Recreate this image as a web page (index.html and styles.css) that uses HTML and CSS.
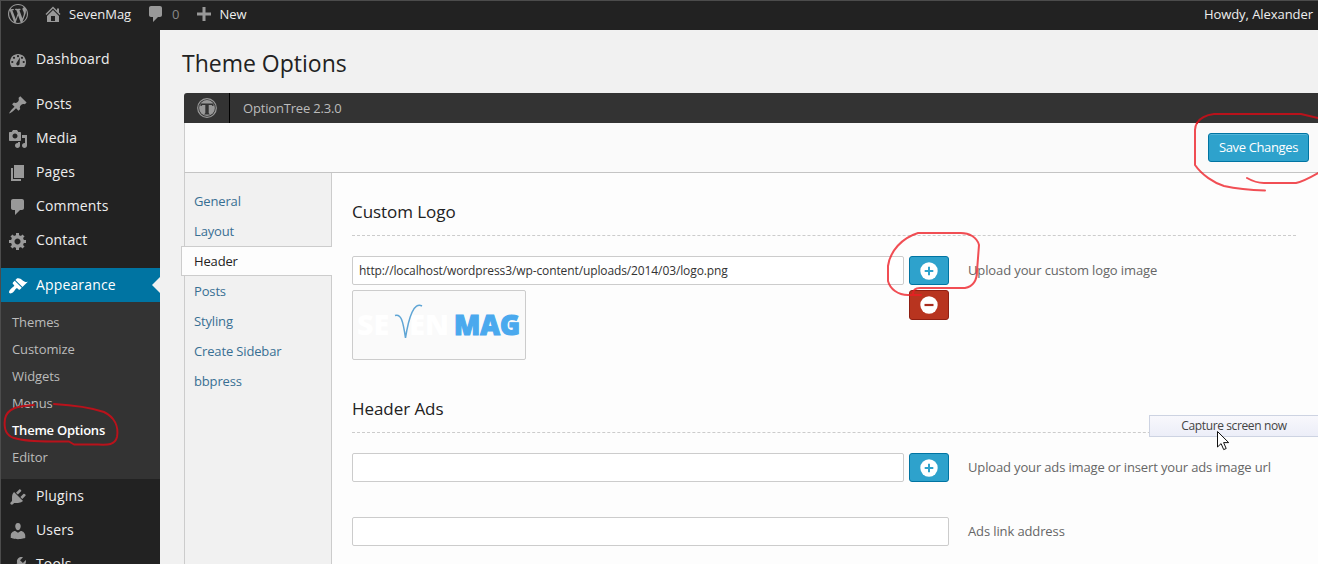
FILE: index.html
```
<!DOCTYPE html>
<html lang="en">
<head>
<meta charset="utf-8">
<title>Theme Options</title>
<link rel="stylesheet" href="styles.css">
</head>
<body>
<div class="page">
  <header class="adminbar">
    <svg class="ico wp" viewBox="0 0 20 20"><path d="M20 10c0-5.51-4.49-10-10-10C4.48 0 0 4.49 0 10c0 5.52 4.48 10 10 10 5.51 0 10-4.48 10-10zM7.78 15.37L4.37 6.22c.55-.02 1.17-.08 1.17-.08.5-.06.44-1.13-.06-1.11 0 0-1.45.11-2.37.11-.18 0-.37 0-.58-.01C4.12 2.69 6.87 1.11 10 1.11c2.33 0 4.45.87 6.05 2.34-.68-.11-1.65.39-1.65 1.58 0 .74.45 1.36.9 2.1.35.61.55 1.36.55 2.46 0 1.49-1.4 5-1.4 5l-3.03-8.37c.54-.02.82-.17.82-.17.5-.05.44-1.25-.06-1.22 0 0-1.44.12-2.38.12-.87 0-2.33-.12-2.33-.12-.5-.03-.56 1.2-.06 1.22l.92.08 1.26 3.41zM17.41 10c.24-.64.74-1.87.43-4.25.7 1.29 1.05 2.71 1.05 4.25 0 3.29-1.73 6.24-4.4 7.78.97-2.59 1.94-5.2 2.92-7.78zM6.1 18.09C3.12 16.65 1.11 13.53 1.11 10c0-1.3.23-2.48.72-3.59C3.25 10.3 4.67 14.2 6.1 18.09zm4.03-6.63l2.58 6.98c-.86.29-1.76.45-2.71.45-.79 0-1.57-.11-2.29-.33.81-2.38 1.62-4.74 2.42-7.1z"/></svg>
    <svg class="ico home" viewBox="0 0 20 20"><path fill-rule="evenodd" d="M16 8.5l1.53 1.53-1.06 1.06L10 4.6l-6.47 6.49-1.06-1.06L10 2.5l4 4v-2h2v4zm-6-2.46l6 5.99V18H4v-5.97zM12 17v-5H8v5h4z"/></svg>
    <span class="site">SevenMag</span>
    <svg class="ico bubble" viewBox="0 0 20 20"><path d="M5 2h9c1.1 0 2 .9 2 2v7c0 1.1-.9 2-2 2h-2l-5 5v-5H5c-1.1 0-2-.9-2-2V4c0-1.1.9-2 2-2z"/></svg>
    <span class="count">0</span>
    <svg class="ico plus" viewBox="0 0 14 14"><path d="M5.5 0h3v5.500h5.500v3h-5.500v5.500h-3v-5.500h-5.500v-3h5.500z"/></svg>
    <span class="new">New</span>
    <span class="howdy">Howdy, Alexander</span>
  </header>
  <div class="body">
    <nav class="menu">
      <a class="item first"><svg class="ico" viewBox="0 0 20 20"><path fill-rule="evenodd" d="M3.760 17h12.480c1.100-1.370 1.760-3.110 1.760-5 0-4.420-3.580-8-8-8s-8 3.580-8 8c0 1.890.66 3.630 1.760 5z"/><g class="hole"><circle cx="10" cy="6.200" r="1.100"/><circle cx="6" cy="7.800" r="1.100"/><circle cx="14" cy="7.800" r="1.100"/><circle cx="4.300" cy="12" r="1.100"/><circle cx="15.700" cy="12" r="1.100"/><path d="M12 7.500l-.4 6a1.700 1.700 0 1 1-2.800-1z"/></g></svg>Dashboard</a>
      <a class="item gap"><svg class="ico" viewBox="0 0 20 20"><path d="M10.440 3.020l1.820-1.820 6.360 6.350-1.830 1.820c-1.050-.68-2.480-.57-3.410.36l-.75.75c-.92.93-1.040 2.350-.35 3.410l-1.830 1.820-2.410-2.410-2.800 2.790c-.42.42-3.380 2.710-3.800 2.290s1.860-3.390 2.280-3.810l2.790-2.790L4.100 9.360l1.830-1.820c1.050.69 2.480.57 3.400-.36l.75-.75c.93-.92 1.050-2.350.36-3.410z"/></svg>Posts</a>
      <a class="item"><svg class="ico" viewBox="0 0 20 20"><path fill-rule="evenodd" d="M13 11V4c0-.55-.45-1-1-1h-1.670L9 1H5L3.670 3H2c-.55 0-1 .45-1 1v7c0 .55.45 1 1 1h10c.55 0 1-.45 1-1zM7 4.500c1.380 0 2.500 1.120 2.500 2.500S8.380 9.500 7 9.500 4.500 8.380 4.500 7 5.620 4.500 7 4.500zM14 6h5v10.500c0 1.380-1.120 2.500-2.500 2.500S14 17.880 14 16.500s1.120-2.500 2.500-2.500c.17 0 .34.02.5.05V9h-3V6zm-4 8.050V13h2v3.500c0 1.380-1.120 2.500-2.500 2.500S7 17.880 7 16.500 8.120 14 9.500 14c.17 0 .34.02.5.05z"/></svg>Media</a>
      <a class="item"><svg class="ico" viewBox="0 0 20 20"><path d="M6 15V2h10v13H6zm-1 1h8v2H3V5h2v11z"/></svg>Pages</a>
      <a class="item"><svg class="ico" viewBox="0 0 20 20"><path d="M5 2h9c1.100 0 2 .9 2 2v7c0 1.100-.9 2-2 2h-2l-5 5v-5H5c-1.100 0-2-.9-2-2V4c0-1.100.9-2 2-2z"/></svg>Comments</a>
      <a class="item"><svg class="ico" viewBox="0 0 20 20"><path fill-rule="evenodd" d="M18 12h-2.180c-.17.7-.44 1.350-.81 1.930l1.540 1.540-2.100 2.100-1.540-1.540c-.58.36-1.230.63-1.910.79V19H8v-2.180c-.68-.16-1.330-.43-1.910-.79l-1.540 1.540-2.120-2.120 1.540-1.540c-.36-.58-.63-1.230-.79-1.910H1V9.030h2.170c.16-.7.44-1.350.8-1.940L2.430 5.550l2.100-2.100 1.540 1.540c.58-.37 1.240-.64 1.930-.81V2h3v2.180c.68.160 1.330.43 1.910.79l1.540-1.540 2.120 2.120-1.540 1.540c.36.59.64 1.240.8 1.940H18V12zm-8.500 1.500c1.660 0 3-1.340 3-3s-1.340-3-3-3-3 1.340-3 3 1.340 3 3 3z"/></svg>Contact</a>
      <a class="item gap current"><svg class="ico" viewBox="0 0 20 20"><path d="M14.480 11.060L7.410 3.990l1.500-1.500c.5-.56 2.300-.47 3.510.32 1.210.8 1.430 1.280 2.910 2.100 1.180.64 2.450 1.260 4.450.85zm-.71.71L6.700 4.700 4.930 6.470c-.39.39-.39 1.020 0 1.410l1.060 1.060c.39.39.39 1.030 0 1.420-.6.6-1.430 1.110-2.210 1.690-.35.26-.7.53-1.010.84C1.430 14.230.4 16.080 1.400 17.070c.99 1 2.840-.03 4.180-1.360.31-.31.58-.66.85-1.020.57-.78 1.080-1.610 1.690-2.210.39-.39 1.020-.39 1.410 0l1.060 1.060c.39.39 1.020.39 1.410 0z"/></svg>Appearance</a>
      <div class="submenu">
        <a>Themes</a><a>Customize</a><a>Widgets</a><a>Menus</a><a class="on">Theme Options</a><a>Editor</a>
      </div>
      <a class="item"><svg class="ico" viewBox="0 0 20 20"><path d="M13.110 4.360L9.870 7.600 8 5.730l3.240-3.240c.35-.34 1.050-.2 1.560.32.52.51.66 1.210.31 1.550zm-8 1.770l.91-1.120 9.010 9.010-1.190.84c-.71.71-2.630 1.160-3.820 1.160H6.140L4.900 17.260c-.59.59-1.540.59-2.120 0-.59-.58-.59-1.530 0-2.120l1.240-1.240v-3.880c0-1.130.4-3.190 1.090-3.890zm7.260 3.970l3.240-3.240c.34-.35 1.040-.21 1.550.31.52.51.66 1.210.31 1.550l-3.240 3.250z"/></svg>Plugins</a>
      <a class="item"><svg class="ico" viewBox="0 0 20 20"><path d="M10 9.250c-2.270 0-2.730-3.440-2.730-3.440C7 4.020 7.820 2 9.970 2c2.160 0 2.980 2.020 2.710 3.810 0 0-.41 3.440-2.680 3.440zm0 2.570L12.720 10c2.390 0 4.520 2.330 4.520 4.530v2.490s-3.650 1.130-7.240 1.130c-3.650 0-7.240-1.130-7.240-1.130v-2.490c0-2.250 1.940-4.480 4.470-4.480z"/></svg>Users</a>
      <a class="item"><svg class="ico" viewBox="0 0 20 20"><path d="M16.680 9.770c-1.340 1.340-3.300 1.670-4.950.99l-5.410 6.520c-.99.99-2.590.99-3.580 0s-.99-2.590 0-3.570l6.520-5.420c-.68-1.650-.35-3.610.99-4.950 1.280-1.280 3.120-1.620 4.720-1.060l-2.890 2.890 2.820 2.820 2.860-2.870c.53 1.580.18 3.390-1.080 4.650z"/></svg>Tools</a>
    </nav>
    <main class="main">
      <h1>Theme Options</h1>
      <section class="panel">
        <div class="panel-head">
          <div class="badge"><svg viewBox="0 0 20 20"><circle cx="10" cy="10" r="9.300" fill="none" stroke="#999" stroke-width="1.200"/><circle cx="10" cy="10" r="7.900" fill="#999"/><path d="M3.500 8V5.400h13V8h-1l-.8-1.100h-3V15l1.200 1.500H7.100L8.300 15V6.900h-3L4.500 8z" fill="#333"/></svg></div>
          <span>OptionTree 2.3.0</span>
        </div>
        <div class="toolbar"><button class="save">Save Changes</button></div>
        <div class="columns">
          <ul class="tabs">
            <li>General</li><li>Layout</li><li class="active">Header</li><li>Posts</li><li>Styling</li><li>Create Sidebar</li><li>bbpress</li>
          </ul>
          <div class="content">
            <h2>Custom Logo</h2>
            <div class="row logo-row">
              <div class="field">
                <div class="line">
                  <div class="input">http://localhost/wordpress3/wp-content/uploads/2014/03/logo.png</div>
                  <button class="sq"><svg viewBox="0 0 18 18"><circle cx="9" cy="9" r="8.700" fill="#fff"/><path d="M9 4.700v8.600M4.700 9h8.600" stroke="#2ea2cc" stroke-width="2"/></svg></button>
                </div>
                <div class="line second">
                  <div class="preview">
                    <svg viewBox="0 0 172 68"><text class="seven" x="4" y="44" textLength="92" lengthAdjust="spacingAndGlyphs">SE<tspan class="gapv">V</tspan>EN</text><text class="mag" x="101" y="44" textLength="66" lengthAdjust="spacingAndGlyphs">MAG</text><path class="vee" d="M42 24.500c6-2 8 5 10.500 22.500C56 25 61 11 69 15"/></svg>
                  </div>
                  <button class="sq red"><svg viewBox="0 0 18 18"><circle cx="9" cy="9" r="8.700" fill="#fff"/><path d="M4.500 9h9" stroke="#a92a1c" stroke-width="2.200"/></svg></button>
                </div>
              </div>
              <p>Upload your custom logo image</p>
            </div>
            <h2>Header Ads</h2>
            <div class="row ads-row">
              <div class="field">
                <div class="line">
                  <div class="input"></div>
                  <button class="sq"><svg viewBox="0 0 18 18"><circle cx="9" cy="9" r="8.700" fill="#fff"/><path d="M9 4.700v8.600M4.700 9h8.600" stroke="#2ea2cc" stroke-width="2"/></svg></button>
                </div>
              </div>
              <p>Upload your ads image or insert your ads image url</p>
            </div>
            <div class="row">
              <div class="field"><div class="input"></div></div>
              <p>Ads link address</p>
            </div>
          </div>
        </div>
      </section>
    </main>
  </div>
  <div class="capture">Capture screen now</div>
  <svg class="overlay" viewBox="0 0 1318 564">
    <path class="cursor" d="M1217.500 431.500v15.500l3.600-3.400 2.600 6 2.500-1.100-2.600-5.900h5.100z"/>
    <g class="ink">
      <path class="dark" d="M54 404C72 405 92 408 104 412C114 417 119 426 117 437C115 445 108 445 98 444.500H74L69 441.500C55 441 30 443 14 438C4 435 4 426 5 419C7 408 18 406 34 405"/>
      <path d="M913 294C913 289 916 288 920 288H965C975 286 977 279 977 271L979 245C977 237 969 233 961 233H918C902 238 890 251 888 266V281C890 289 898 295 908 295H921"/>
      <path class="dark" d="M1318 118L1301 114H1214C1206 115 1200 118 1197 123"/>
      <path d="M1197 123Q1195 126 1195 130V165C1202 175 1214 183 1224 186C1238 189 1250 190 1265 190.500"/>
      <path d="M1247 178C1254 182 1258 183 1264 183H1296C1304 181 1311 177 1318 173"/>
    </g>
  </svg>
</div>
</body>
</html>
```
FILE: styles.css
```
* { box-sizing: border-box; }
body { margin: 0; font-family: "Open Sans", sans-serif; font-size: 13px; overflow: hidden; }
.page { position: relative; width: 1318px; height: 564px; overflow: hidden; background: #f1f1f1; display: flex; flex-direction: column; }
.page::after { content: ""; position: absolute; inset: 0; border-left: 1px solid #4c4c4c; border-top: 1px solid #4c4c4c; }
.ico { width: 20px; height: 20px; fill: #999; flex: none; display: block; }

.adminbar { flex: none; height: 30px; background: #222; color: #eee; display: flex; align-items: center; padding: 0 5px 2px 8px; line-height: 30px; }
.adminbar span { display: block; height: 30px; }
.adminbar .home { margin-left: 15px; }
.site { margin-left: 6px; width: 64px; }
.adminbar .bubble { margin-left: 13px; }
.adminbar .count { margin-left: 6px; color: #888; }
.adminbar .plus { width: 14px; height: 14px; margin-left: 18px; }
.new { margin-left: 8px; }
.howdy { margin-left: auto; letter-spacing: -.06px; }

.body { flex: none; height: 534px; display: flex; }
.menu { width: 160px; background: #222; padding-top: 12px; flex: none; display: flex; flex-direction: column; }
.item { height: 34px; flex: none; display: flex; align-items: center; padding: 0 0 0 8px; gap: 8px; color: #eee; font-size: 14px; line-height: 34px; letter-spacing: .15px; }
.item .ico { margin-top: 1px; }
.hole { fill: #222; }
.gap { margin-top: 11px; }
.current { background: #0074a2; color: #fff; position: relative; }
.current .ico { fill: #fff; }
.current::after { content: ""; position: absolute; right: 0; top: 9px; border: 8px solid transparent; border-right-color: #f1f1f1; border-left: 0; }
.submenu { flex: none; height: 177px; background: #333; padding: 7px 12px; display: flex; flex-direction: column; color: #bbb; letter-spacing: -.08px; }
.submenu a { height: 27px; line-height: 27px; }
.submenu .on { color: #fff; font-weight: 600; letter-spacing: -.23px; }

.main { flex: 1; padding-left: 24px; }
h1 { margin: 0 0 0 -2px; height: 63px; padding-top: 17px; line-height: 32px; font-size: 23px; font-weight: 400; color: #222; }
.panel { display: flex; flex-direction: column; height: 471px; }
.panel-head { flex: none; height: 30px; background: #333; border-top-left-radius: 3px; display: flex; color: #bbb; line-height: 30px; letter-spacing: -.18px; }
.badge { width: 46px; border-right: 1px solid #000; padding: 5px 0 0 13px; }
.badge svg { width: 20px; height: 20px; display: block; }
.panel-head span { margin-left: 13px; }
.toolbar { flex: none; height: 50px; background: #fafafa; border-left: 1px solid #ccc; border-bottom: 1px solid #c4c4c4; display: flex; justify-content: flex-end; padding: 10px 9px 0 0; }
.save { width: 101px; height: 29px; padding: 0 0 1px; background: #2ea2cc; border: 1px solid #0074a2; border-radius: 3px; color: #fff; font: 13px "Open Sans", sans-serif; letter-spacing: -.35px; box-shadow: inset 0 1px 0 rgba(120,200,230,.5); }
.columns { flex: 1; display: flex; background: #fdfdfd; border-left: 1px solid #ccc; }
.tabs { margin: 0; padding: 13px 0 0; list-style: none; width: 147px; flex: none; background: #f1f1f1; border-right: 1px solid #ccc; color: #386f93; letter-spacing: -.15px; }
.tabs li { height: 30px; line-height: 30px; padding-left: 9px; }
.tabs .active { margin: 0 -1px 0 -4px; padding-left: 12px; line-height: 28px; background: #fdfdfd; border: 1px solid #ccc; border-right: 0; color: #222; }
.content { flex: 1; padding: 25px 22px 0 20px; color: #666; }
h2 { margin: 0 0 20px; height: 38px; line-height: 28px; border-bottom: 1px dashed #ccc; font-size: 17px; font-weight: 400; color: #222; letter-spacing: -.06px; }
.row { display: flex; gap: 19px; }
.row p { margin: 0; line-height: 29px; white-space: nowrap; letter-spacing: -.12px; }
.ads-row p { letter-spacing: -.15px; }
.field { width: 597px; flex: none; }
.line { display: flex; gap: 5px; height: 29px; }
.second { margin-top: 5px; justify-content: space-between; }
.input { flex: 1; height: 29px; border: 1px solid #ccc; background: #fff; padding-left: 6px; line-height: 27px; font-size: 12px; color: #333; border-radius: 2px; letter-spacing: -.11px; }
.sq { width: 40px; height: 29px; padding: 0; border: 1px solid #0074a2; border-radius: 3px; background: #2ea2cc; display: flex; align-items: center; justify-content: center; flex: none; }
.sq svg { width: 18px; height: 18px; }
.red { height: 30px; background: #b8341f; border-color: #8f1f12; }
.preview { width: 174px; height: 70px; border: 1px solid #ccc; background: #fafafa; border-radius: 2px; }
.preview svg { display: block; width: 172px; height: 68px; }
.seven, .mag { font: 800 29px "Open Sans", sans-serif; fill: #4aa9ee; }
.mag { stroke: #4aa9ee; stroke-width: 1.2; }
.seven { fill: #fff; }
.gapv { fill: none; }
.vee { fill: none; stroke: #5fa5d5; stroke-width: 1.5; }
.logo-row { height: 104px; margin-bottom: 35px; }
.ads-row { height: 64px; }

.capture { position: absolute; left: 1149px; top: 415px; width: 170px; height: 22px; border: 1px solid #cdd3e2; background: linear-gradient(#f8f8fc, #eceef8); text-align: center; line-height: 20px; font-size: 12px; letter-spacing: -.38px; color: #444; }
.overlay { position: absolute; left: 0; top: 0; width: 1318px; height: 564px; }
.cursor { fill: #fff; stroke: #111; stroke-width: 1; }
.ink { fill: none; stroke: #ed1c24; stroke-opacity: .78; stroke-width: 2; stroke-linecap: round; stroke-linejoin: round; }
.ink .dark { stroke: #b9121b; stroke-opacity: 1; }
```
